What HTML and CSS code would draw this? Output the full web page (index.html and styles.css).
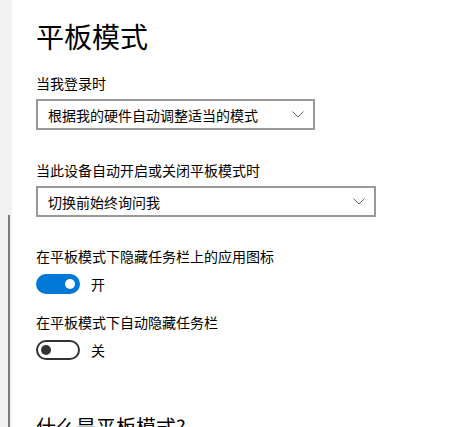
FILE: index.html
```html
<!DOCTYPE html>
<html lang="zh-CN">
<head>
<meta charset="utf-8">
<link rel="stylesheet" href="styles.css">
</head>
<body>
<div class="window">
  <aside class="sidebar"><div class="scrollbar"></div></aside>
  <main class="content">
    <h1 class="title">平板模式</h1>
    <div class="label first">当我登录时</div>
    <div class="select select-1">
      <span class="select-text">根据我的硬件自动调整适当的模式</span>
      <svg class="chev" width="12" height="7" viewBox="0 0 12 7"><path d="M0.5 0.5 L6 6 L11.5 0.5" fill="none" stroke="#666" stroke-width="1"/></svg>
    </div>
    <div class="label second">当此设备自动开启或关闭平板模式时</div>
    <div class="select select-2">
      <span class="select-text">切换前始终询问我</span>
      <svg class="chev" width="12" height="7" viewBox="0 0 12 7"><path d="M0.5 0.5 L6 6 L11.5 0.5" fill="none" stroke="#666" stroke-width="1"/></svg>
    </div>
    <div class="label third">在平板模式下隐藏任务栏上的应用图标</div>
    <div class="toggle-row">
      <span class="toggle on"><span class="knob"></span></span>
      <span class="toggle-text">开</span>
    </div>
    <div class="label fourth">在平板模式下自动隐藏任务栏</div>
    <div class="toggle-row">
      <span class="toggle off"><span class="knob"></span></span>
      <span class="toggle-text">关</span>
    </div>
    <h2 class="subtitle">什么是平板模式?</h2>
  </main>
</div>
</body>
</html>
```
FILE: styles.css
```css
html, body {
  margin: 0;
  padding: 0;
  background: #ffffff;
  overflow: hidden;
}
body {
  font-family: "Noto Sans CJK SC", "Noto Sans", sans-serif;
  color: #000;
}
.window {
  display: flex;
  width: 471px;
  height: 427px;
  overflow: hidden;
}
.sidebar {
  width: 12px;
  flex: none;
  background: #f2f2f2;
  padding-top: 215px;
  box-sizing: border-box;
}
.scrollbar {
  width: 2px;
  height: 300px;
  margin-left: 8px;
  background: #7a7a7a;
}
.content {
  flex: 1;
  padding-left: 24px;
}
.title {
  margin: 0;
  padding-top: 17px;
  font-size: 28px;
  font-weight: 400;
  line-height: 38px;
}
.label {
  font-size: 14px;
  line-height: 20px;
}
.label.first { margin-top: 18px; }
.label.second { margin-top: 30px; }
.label.third { margin-top: 29px; }
.label.fourth { margin-top: 18px; }
.select {
  box-sizing: border-box;
  height: 31px;
  border: 2px solid #999999;
  display: flex;
  align-items: center;
  justify-content: space-between;
  padding: 0 9px 0 10px;
  margin-top: 6px;
  font-size: 14px;
}
.select-1 { width: 279px; }
.select-2 { width: 340px; }
.chev { display: block; }
.toggle-row {
  display: flex;
  align-items: center;
  gap: 11px;
  margin-top: 8px;
  height: 20px;
}
.toggle {
  box-sizing: border-box;
  width: 44px;
  height: 20px;
  border-radius: 10px;
  display: flex;
  align-items: center;
  padding: 0 5px;
}
.toggle.on {
  background: #0078d7;
  justify-content: flex-end;
}
.toggle.on .knob { background: #fff; }
.toggle.off {
  border: 2px solid #333;
  padding: 0 3px;
}
.toggle.off .knob { background: #333; }
.knob {
  width: 10px;
  height: 10px;
  border-radius: 50%;
}
.toggle-text {
  font-size: 14px;
}
.subtitle {
  margin: 53px 0 0 0;
  font-size: 20px;
  font-weight: 400;
  line-height: 28px;
}
```
